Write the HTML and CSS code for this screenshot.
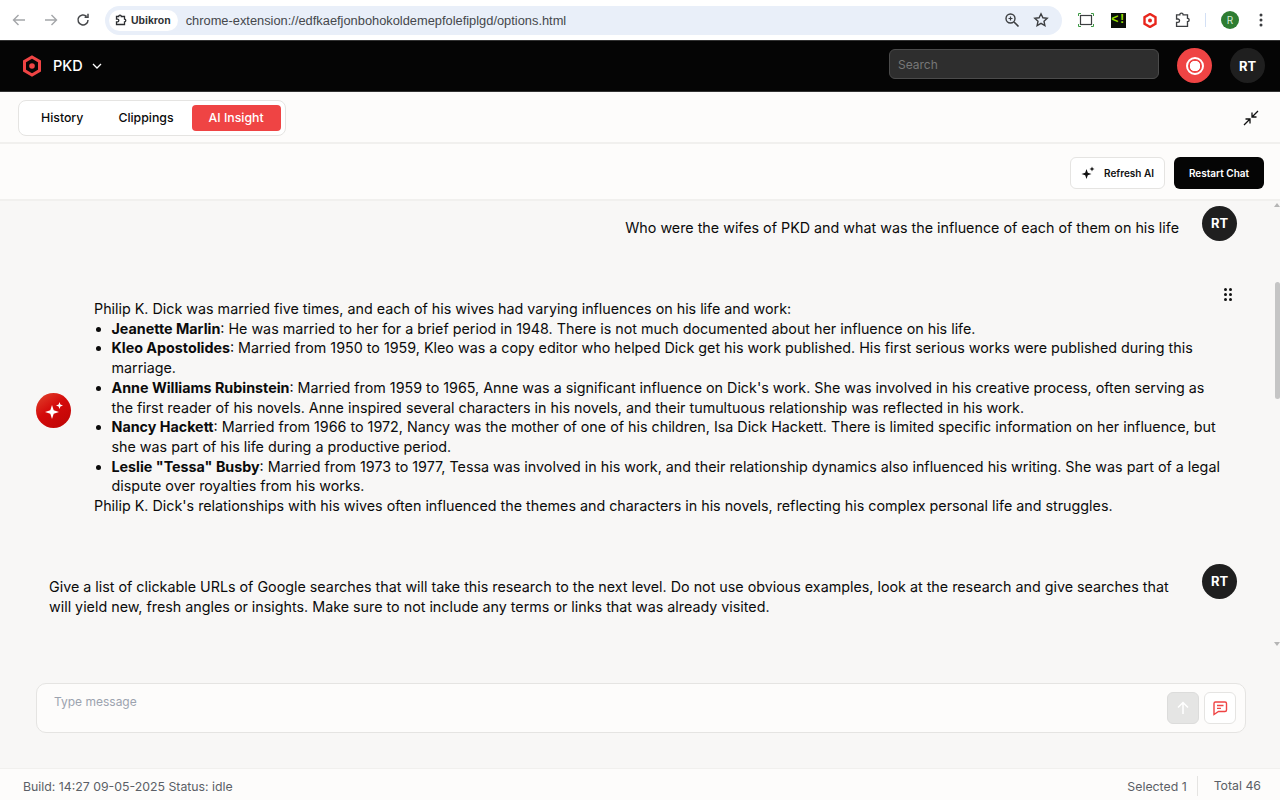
FILE: index.html
```html
<!DOCTYPE html>
<html lang="en">
<head>
    <meta charset="UTF-8">
    <title>PKD - AI Insight</title>
    <link rel="stylesheet" href="styles.css">
</head>
<body>
    <!-- browser toolbar -->
    <div class="browser-bar">
        <svg class="nav-icon" width="16" height="16" viewBox="0 0 16 16"><path d="M14 8H2.500M7.500 3l-5 5 5 5" fill="none" stroke="#a4a6a9" stroke-width="1.400"/></svg>
        <svg class="nav-icon" width="16" height="16" viewBox="0 0 16 16"><path d="M2 8h11.500M8.500 3l5 5-5 5" fill="none" stroke="#a4a6a9" stroke-width="1.400"/></svg>
        <svg class="nav-icon" width="16" height="16" viewBox="0 0 16 16"><path d="M13 8a5 5 0 1 1-1.500-3.600M13 1.800v3.400H9.600" fill="none" stroke="#46484b" stroke-width="1.500"/></svg>
        <div class="omnibox">
            <div class="site-chip">
                <svg width="14" height="14" viewBox="0 0 14 14"><path d="M2.500 3.500h2.200a1.300 1.300 0 0 1 2.600 0h3.200v2.700a1.300 1.300 0 0 1 0 2.600v2.700H2.500V8.800h1a1.300 1.300 0 0 0 0-2.600h-1z" fill="none" stroke="#2c2e31" stroke-width="1.300"/></svg>
                Ubikron
            </div>
            <span class="url">chrome-extension://edfkaefjonbohokoldemepfolefiplgd/options.html</span>
            <svg class="omni-icon" width="16" height="16" viewBox="0 0 16 16"><circle cx="6.500" cy="6.500" r="4.500" fill="none" stroke="#3c3e41" stroke-width="1.400"/><path d="M10 10l4.500 4.500" stroke="#3c3e41" stroke-width="1.600"/><path d="M4.500 6.500h4M6.500 4.500v4" stroke="#3c3e41" stroke-width="1.200"/></svg>
            <svg class="omni-icon" width="16" height="16" viewBox="0 0 16 16"><path d="M8 1.800l1.900 4 4.300.500-3.200 3 .9 4.300L8 11.400l-3.900 2.200.9-4.300-3.200-3 4.300-.500z" fill="none" stroke="#3c3e41" stroke-width="1.400"/></svg>
        </div>
        <div class="ext-icons">
            <svg width="16" height="14" viewBox="0 0 16 14"><rect x="2.500" y="2.500" width="11" height="9" fill="none" stroke="#3c3e41" stroke-width="1.200"/><path d="M.500 3V.500H3M13 .500h2.500V3M.500 11v2.500H3M13 13.500h2.500V11" fill="none" stroke="#3f9b46" stroke-width="1"/></svg>
            <div class="ext-term">&lt;!</div>
            <svg width="14" height="15" viewBox="0 0 14 15"><path d="M7 1l5.500 3.200v6.600L7 14l-5.500-3.200V4.200z" fill="none" stroke="#e8261c" stroke-width="2.400"/><circle cx="7" cy="7.500" r="2" fill="#e8261c"/></svg>
            <svg class="ext-puzzle" width="18" height="18" viewBox="0 0 14 14"><path d="M2 3h2.500a1.300 1.300 0 0 1 2.600 0h3.400v2.700a1.300 1.300 0 0 1 0 2.600V12H2V8.800h1a1.300 1.300 0 0 0 0-2.600H2z" fill="none" stroke="#3c3e41" stroke-width="1.050"/></svg>
            <div class="ext-sep"></div>
            <div class="profile">R</div>
            <svg width="4" height="14" viewBox="0 0 4 14"><circle cx="2" cy="2" r="1.500" fill="#3c3e41"/><circle cx="2" cy="7" r="1.500" fill="#3c3e41"/><circle cx="2" cy="12" r="1.500" fill="#3c3e41"/></svg>
        </div>
    </div>

    <!-- app header -->
    <header class="app-header">
        <svg class="logo" width="20" height="22" viewBox="0 0 20 22"><path d="M10 2l7.500 4.400v9.200L10 20l-7.500-4.400V6.400z" fill="none" stroke="#ef4444" stroke-width="3"/><circle cx="10" cy="11" r="2.800" fill="#ef4444"/></svg>
        <span class="workspace">PKD</span>
        <svg width="10" height="6" viewBox="0 0 10 6"><path d="M1 1l4 4 4-4" fill="none" stroke="#fff" stroke-width="1.300"/></svg>
        <div class="search">Search</div>
        <div class="record"><span class="record-ring"></span></div>
        <div class="avatar">RT</div>
    </header>

    <div class="tab-bar">
        <div class="tabs">
            <div class="tab">History</div>
            <div class="tab">Clippings</div>
            <div class="tab active">AI Insight</div>
        </div>
        <svg width="16" height="16" viewBox="0 0 16 16"><path d="M15 1L9 7M9 2.500V7h4.500M1 15l6-6M2.500 9H7v4.500" fill="none" stroke="#111" stroke-width="1.300"/></svg>
    </div>

    <div class="action-bar">
        <button class="btn btn-light">
            <svg width="14" height="14" viewBox="0 0 14 14"><path d="M5.500 3l1.300 3.700 3.700 1.300-3.700 1.300-1.300 3.700-1.300-3.700L.500 8l3.700-1.300zM11 .500l.700 1.800 1.800.700-1.800.700-.700 1.800-.700-1.800-1.800-.700 1.800-.700z" fill="#111"/></svg>
            Refresh AI
        </button>
        <button class="btn btn-dark">Restart Chat</button>
    </div>

    <main class="chat-area">
        <div class="scrollbar">
            <div class="scroll-up"></div>
            <div class="scroll-thumb"></div>
            <div class="scroll-down"></div>
        </div>
        <div class="messages">
            <div class="msg msg-user msg-first">
                <p class="user-text">Who were the wifes of PKD and what was the influence of each of them on his life</p>
                <div class="avatar">RT</div>
            </div>
            <div class="msg msg-bot">
                <div class="bot-avatar">
                    <svg width="22" height="22" viewBox="0 0 22 22"><path d="M9 5l1.700 5.300L16 12l-5.300 1.700L9 19l-1.700-5.300L2 12l5.300-1.700zM16.500 2l.9 2.600 2.600.9-2.600.9-.9 2.600-.9-2.600-2.600-.9 2.600-.9z" fill="#fff"/></svg>
                </div>
                <div class="bot-text">
                    Philip K. Dick was married five times, and each of his wives had varying influences on his life and work:
                    <ul>
                        <li><b>Jeanette Marlin</b>: He was married to her for a brief period in 1948. There is not much documented about her influence on his life.</li>
                        <li><b>Kleo Apostolides</b>: Married from 1950 to 1959, Kleo was a copy editor who helped Dick get his work published. His first serious works were published during this marriage.</li>
                        <li><b>Anne Williams Rubinstein</b>: Married from 1959 to 1965, Anne was a significant influence on Dick's work. She was involved in his creative process, often serving as the first reader of his novels. Anne inspired several characters in his novels, and their tumultuous relationship was reflected in his work.</li>
                        <li><b>Nancy Hackett</b>: Married from 1966 to 1972, Nancy was the mother of one of his children, Isa Dick Hackett. There is limited specific information on her influence, but she was part of his life during a productive period.</li>
                        <li><b>Leslie "Tessa" Busby</b>: Married from 1973 to 1977, Tessa was involved in his work, and their relationship dynamics also influenced his writing. She was part of a legal dispute over royalties from his works.</li>
                    </ul>
                    Philip K. Dick's relationships with his wives often influenced the themes and characters in his novels, reflecting his complex personal life and struggles.
                </div>
                <svg class="drag-dots" width="8" height="13" viewBox="0 0 8 13"><g fill="#111"><circle cx="1.500" cy="1.500" r="1.500"/><circle cx="6.500" cy="1.500" r="1.500"/><circle cx="1.500" cy="6.500" r="1.500"/><circle cx="6.500" cy="6.500" r="1.500"/><circle cx="1.500" cy="11.500" r="1.500"/><circle cx="6.500" cy="11.500" r="1.500"/></g></svg>
            </div>
            <div class="msg msg-user">
                <p class="user-text user-long">Give a list of clickable URLs of Google searches that will take this research to the next level. Do not use obvious examples, look at the research and give searches that will yield new, fresh angles or insights. Make sure to not include any terms or links that was already visited.</p>
                <div class="avatar">RT</div>
            </div>
        </div>
        <div class="composer">
            <span class="placeholder">Type message</span>
            <div class="composer-btns">
                <div class="send-btn">
                    <svg width="14" height="14" viewBox="0 0 14 14"><path d="M7 13V1.500M2 6.500l5-5 5 5" fill="none" stroke="#fff" stroke-width="1.500"/></svg>
                </div>
                <div class="note-btn">
                    <svg width="16" height="16" viewBox="0 0 16 16"><path d="M3.500 2h9.500a1.500 1.500 0 0 1 1.500 1.500v6.500a1.500 1.500 0 0 1-1.500 1.500H6.500L2 14.500V3.500A1.500 1.500 0 0 1 3.500 2z" fill="none" stroke="#ef4444" stroke-width="1.400"/><path d="M5 5.500h6.500M5 8.300h4" stroke="#ef4444" stroke-width="1.300"/></svg>
                </div>
            </div>
        </div>
    </main>

    <footer class="status-bar">
        <span>Build: 14:27 09-05-2025 Status: idle</span>
        <div class="status-right">
            <span>Selected 1</span>
            <span class="total">Total 46</span>
        </div>
    </footer>
</body>
</html>
```
FILE: styles.css
```css
* {
    box-sizing: border-box;
}
body {
    margin: 0;
    width: 1280px;
    height: 800px;
    overflow: hidden;
    font-family: "Inter", "Liberation Sans", sans-serif;
    background-color: #f8f7f6;
    color: #0b0b0b;
    display: flex;
    flex-direction: column;
}
.browser-bar {
    height: 40px;
    background: #fff;
    display: flex;
    align-items: center;
    padding: 0 0 0 11px;
    flex-shrink: 0;
}
.nav-icon {
    margin-right: 16px;
}
.omnibox {
    width: 957px;
    height: 29px;
    margin-left: -2px;
    background: #e9eff9;
    border-radius: 15px;
    display: flex;
    align-items: center;
    padding: 0 13px 0 4px;
    font-family: "Liberation Sans", sans-serif;
    flex-shrink: 0;
}
.site-chip {
    height: 21px;
    padding: 0 7px 0 5px;
    background: #fff;
    border-radius: 11px;
    display: flex;
    align-items: center;
    gap: 3px;
    font-size: 10.500px;
    font-weight: bold;
    color: #2c2e31;
}
.url {
    font-size: 12.850px;
    color: #45484c;
    margin-left: 8px;
    flex: 1;
}
.omni-icon {
    margin-left: 13px;
}
.ext-icons {
    display: flex;
    align-items: center;
    margin-left: 16px;
}
.ext-icons > * {
    margin-right: 17px;
    flex-shrink: 0;
}
.ext-term {
    width: 15px;
    height: 15px;
    background: #0b0f0a;
    color: #9be000;
    font: bold 12px/15px "Liberation Mono", monospace;
    text-align: center;
}
.ext-icons .ext-puzzle {
    margin-right: 13px;
}
.ext-icons .ext-sep {
    width: 1px;
    height: 14px;
    background: #d3e0f5;
    margin-right: 15px;
}
.ext-icons .profile {
    width: 18px;
    height: 18px;
    border-radius: 50%;
    background: #2e7d32;
    color: #d7ecd8;
    font-size: 10px;
    line-height: 18px;
    text-align: center;
    margin-right: 20px;
}
.app-header {
    height: 52px;
    background: #050505;
    border-top: 1px solid #333;
    border-bottom: 1px solid #333;
    display: flex;
    align-items: center;
    padding: 0 15px 1px 22px;
    flex-shrink: 0;
    color: #fff;
}
.workspace {
    font-size: 14.500px;
    font-weight: 500;
    margin: 0 9px 0 11px;
}
.search {
    width: 270px;
    height: 30px;
    margin: 0 0 3px auto;
    background: #2e2e2e;
    border: 1px solid #4b4b4b;
    border-radius: 6px;
    color: #777;
    font-size: 12px;
    line-height: 29px;
    padding-left: 8px;
}
.record {
    width: 35px;
    height: 35px;
    margin: 0 18px;
    border-radius: 50%;
    background: #ef4444;
    display: flex;
    align-items: center;
    justify-content: center;
}
.record-ring {
    width: 18px;
    height: 18px;
    border-radius: 50%;
    border: 2px solid #fff;
    background: radial-gradient(circle, #fff 0 5px, #ef4444 5.500px);
}
.avatar {
    width: 35px;
    height: 35px;
    border-radius: 50%;
    background: #1f1f1f;
    color: #fff;
    font-size: 13px;
    font-weight: bold;
    display: flex;
    align-items: center;
    justify-content: center;
    flex-shrink: 0;
}
.tab-bar {
    height: 52px;
    background: #fdfcfb;
    border-bottom: 2px solid #f1f0ee;
    display: flex;
    align-items: center;
    justify-content: space-between;
    padding: 2px 21px 0 18px;
    flex-shrink: 0;
}
.tabs {
    height: 36px;
    background: #fff;
    border: 1px solid #e5e4e2;
    border-radius: 8px;
    display: flex;
    align-items: center;
    padding: 0 4px;
}
.tab {
    height: 26px;
    padding: 0 17px 0 18px;
    line-height: 26px;
    font-size: 12.300px;
    font-weight: 500;
    border-radius: 4px;
}
.tab.active {
    margin-left: 1px;
    padding: 0 17px;
    background: #ef4444;
    color: #fff;
}
.action-bar {
    height: 57px;
    background: #fdfcfb;
    border-bottom: 2px solid #f1f0ee;
    display: flex;
    align-items: center;
    justify-content: flex-end;
    gap: 9px;
    padding: 2px 16px 0 0;
    flex-shrink: 0;
}
.btn {
    height: 32px;
    border-radius: 6px;
    font-family: inherit;
    font-size: 10px;
    font-weight: 600;
    display: flex;
    align-items: center;
}
.btn-light {
    width: 95px;
    background: #fff;
    border: 1px solid #e5e4e2;
    color: #111;
    gap: 9px;
    padding: 0 0 0 10px;
}
.btn-dark {
    width: 90px;
    background: #050505;
    border: 0;
    color: #fff;
    justify-content: center;
}
.chat-area {
    flex: 1;
    min-height: 0;
    position: relative;
    display: flex;
    flex-direction: column;
}
.messages {
    height: 449px;
    overflow: hidden;
    padding-right: 43px;
}
.msg {
    display: flex;
    font-size: 14.300px;
    line-height: 19.700px;
}
.msg-first {
    padding-top: 5px;
    height: 98px;
}
.msg-user {
    justify-content: flex-end;
    gap: 23px;
}
.user-text {
    margin: 12px 0 0;
}
.user-long {
    margin: 13px 0 0 49px;
}
.msg-bot {
    padding-left: 36px;
    height: 265px;
    position: relative;
}
.bot-avatar {
    width: 35px;
    height: 35px;
    margin-top: 94px;
    border-radius: 50%;
    background: linear-gradient(145deg, #e2462e, #d40a0a 45%, #bb0505);
    display: flex;
    align-items: center;
    justify-content: center;
    flex-shrink: 0;
}
.bot-text {
    margin-left: 23px;
    width: 1131px;
}
.bot-text ul {
    margin: 0;
    padding-left: 17.500px;
}
.drag-dots {
    position: absolute;
    right: 5px;
    top: -11px;
}
.composer {
    height: 50px;
    margin: 33px 34px 0 36px;
    background: #fdfcfb;
    border: 1px solid #e5e4e2;
    border-radius: 10px;
    display: flex;
    justify-content: space-between;
    padding: 8px 9px 0 17px;
}
.placeholder {
    font-size: 12px;
    color: #9ca3af;
    margin-top: 2px;
}
.composer-btns {
    display: flex;
    gap: 5px;
}
.send-btn,
.note-btn {
    width: 32px;
    height: 32px;
    border-radius: 6px;
    display: flex;
    align-items: center;
    justify-content: center;
}
.send-btn {
    background: #e5e5e4;
    border: 1px solid #dcdcdb;
}
.note-btn {
    background: #fff;
    border: 1px solid #e5e4e2;
}
.scrollbar {
    position: absolute;
    top: 0;
    right: 0;
    width: 6px;
    height: 449px;
}
.scroll-thumb {
    position: absolute;
    top: 81px;
    left: 1px;
    width: 5px;
    height: 117px;
    background: #c5c5c5;
    border-radius: 3px;
}
.scroll-up,
.scroll-down {
    position: absolute;
    left: 0;
    width: 0;
    height: 0;
    border-left: 3px solid transparent;
    border-right: 3px solid transparent;
}
.scroll-up {
    top: 2px;
    border-bottom: 4px solid #b5b5b5;
}
.scroll-down {
    top: 441px;
    border-top: 4px solid #b5b5b5;
}
.status-bar {
    height: 32px;
    background: #fdfcfb;
    border-top: 1px solid #f1f0ee;
    display: flex;
    align-items: center;
    justify-content: space-between;
    padding: 3px 19px 0 23px;
    font-size: 12.300px;
    color: #5b5f66;
    flex-shrink: 0;
}
.status-right {
    display: flex;
    align-items: center;
}
.total {
    margin-left: 10px;
    padding-left: 16px;
    border-left: 1px solid #e5e4e2;
    line-height: 20px;
}
```
